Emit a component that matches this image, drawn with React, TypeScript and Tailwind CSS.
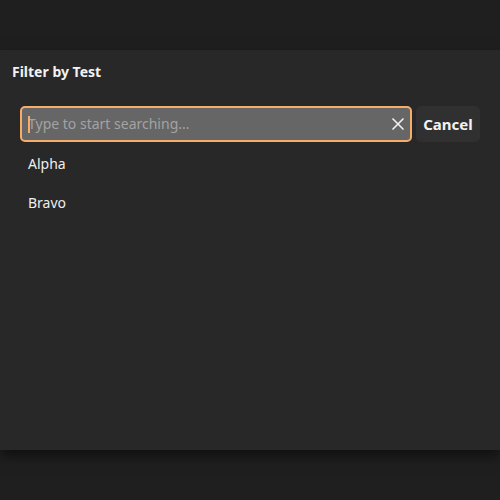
import { X } from 'lucide-react'

const items = ['Alpha', 'Bravo']

export default function App() {
  return (
    <div className="h-[500px] w-[500px] bg-[#1f1f1f] flex flex-col justify-center font-['Noto_Sans',sans-serif]">
      <div className="h-[400px] bg-[#282828] shadow-[0_6px_12px_rgba(0,0,0,0.5)] flex flex-col">
        <h2 className="px-3 pt-3 text-sm leading-5 font-bold text-[#f2f2f2]">Filter by Test</h2>

        <div className="mt-6 px-5 flex items-center gap-1">
          <div className="relative flex-1 h-9 rounded-[5px] border-2 border-[#f5ad69] bg-[#666666] flex items-center pl-[6px] pr-[2px]">
            <span className="absolute left-[6px] top-[8px] h-[17px] w-[2px] bg-[#f5ad69]" />
            <span className="flex-1 text-sm text-[#a3a3a3]">Type to start searching...</span>
            <X size={20} strokeWidth={2} className="text-[#f0f0f0]" />
          </div>
          <button type="button" className="h-9 w-16 rounded-[5px] bg-[#303030] text-[15px] font-bold text-[#f2f2f2]">
            Cancel
          </button>
        </div>

        <ul className="mt-[2px] px-5">
          {items.map(name => (
            <li key={name} className="h-[39px] flex items-center pl-2 text-sm text-[#eeeeee]">{name}</li>
          ))}
        </ul>
      </div>
    </div>
  )
}
